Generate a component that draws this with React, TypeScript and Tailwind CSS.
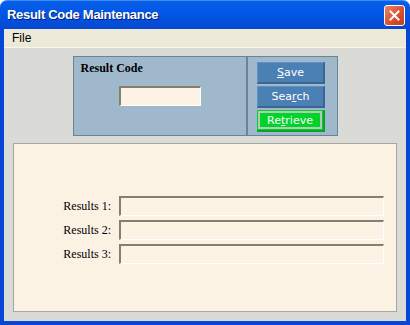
import React from "react";

const serif = { fontFamily: '"Liberation Serif", "Times New Roman", serif' };
const sans = { fontFamily: 'Tahoma, "DejaVu Sans", "Liberation Sans", sans-serif' };

function SunkenField({ className = "" }: { className?: string }) {
  return (
    <div
      className={`h-[20px] bg-[#fcf3e4] border-t-2 border-l-2 border-t-[#848071] border-l-[#848071] border-b border-r border-b-white border-r-white ${className}`}
    />
  );
}

function PanelButton({ children, green = false }: { children: React.ReactNode; green?: boolean }) {
  if (green) {
    return (
      <button className="w-[68px] h-[22px] bg-[#00d42b] border-b-2 border-r-2 border-[#0aa32a] p-[1px] text-white text-[11px] leading-none">
        <div className="w-full h-full border-2 border-[#b8c8b8] flex items-center justify-center">{children}</div>
      </button>
    );
  }
  return (
    <button className="w-[68px] h-[22px] bg-[#4b80b5] border-b-2 border-r-2 border-t border-l border-b-[#3a6690] border-r-[#3a6690] border-t-[#5d90c4] border-l-[#5d90c4] text-white text-[11px] leading-none flex items-center justify-center">
      {children}
    </button>
  );
}

export default function App() {
  return (
    <div className="w-[410px] h-[325px] flex flex-col select-none" style={sans}>
      {/* title bar */}
      <div className="h-[29px] shrink-0 rounded-t-[7px] bg-gradient-to-b from-[#0a5fe8] via-[#0055e5] to-[#0847d0] flex items-center pl-[7px] pr-[5px] border-t border-[#3c8cf8]">
        <span
          className="text-white text-[13px] font-bold tracking-[-0.3px] [text-shadow:1px_1px_0_#0a1e6e]"
          style={{ fontFamily: '"Liberation Sans", Arial, sans-serif' }}
        >
          Result Code Maintenance
        </span>
        <div className="ml-auto w-[21px] h-[21px] rounded-[3px] border border-white bg-gradient-to-br from-[#e9856a] via-[#dc5332] to-[#c83a1c] flex items-center justify-center">
          <svg width="11" height="11" viewBox="0 0 11 11">
            <path d="M1.5 1.5 L9.5 9.5 M9.5 1.5 L1.5 9.5" stroke="white" strokeWidth="2" strokeLinecap="square" />
          </svg>
        </div>
      </div>

      {/* frame */}
      <div className="flex-1 flex flex-col border-x-4 border-b-4 border-[#0846d8]">
        <div
          className="h-[19px] shrink-0 bg-[#ece9d8] flex items-center px-[4px] text-[12px] text-black border-b border-[#f6f5ee]"
          style={{ fontFamily: '"Liberation Sans", Arial, sans-serif' }}
        >
          <span className="px-[4px]">File</span>
        </div>

        <div className="flex-1 bg-[#dadad6] flex flex-col pt-[8px] px-[9px] pb-[9px]">
          {/* top panel */}
          <div className="mx-auto w-[265px] h-[80px] shrink-0 flex border border-[#6c8393] bg-[#9fb8cb]">
            <div className="w-[174px] border-r-2 border-[#6c8393] flex flex-col pl-[7px] pt-[4px]">
              <span className="text-[12px] font-bold text-black leading-[14px]" style={serif}>
                Result Code
              </span>
              <div className="flex justify-center mt-[11px] pr-[7px]">
                <SunkenField className="w-[82px]" />
              </div>
            </div>
            <div className="flex-1 flex flex-col items-center pt-[5px] gap-[2px] pr-[2px]">
              <PanelButton>
                <span><u>S</u>ave</span>
              </PanelButton>
              <PanelButton>
                <span>Sea<u>r</u>ch</span>
              </PanelButton>
              <PanelButton green>
                <span>Re<u>t</u>rieve</span>
              </PanelButton>
            </div>
          </div>

          {/* bottom panel */}
          <div className="mt-[7px] flex-1 border border-[#a6a6a2] bg-[#fcf2e3] flex flex-col justify-center gap-[4px] pr-[12px] pt-[4px]">
            {["Results 1:", "Results 2:", "Results 3:"].map((l) => (
              <div key={l} className="flex items-center gap-[8px]">
                <span className="w-[97px] text-right text-[12px] text-black leading-none" style={serif}>
                  {l}
                </span>
                <SunkenField className="flex-1" />
              </div>
            ))}
          </div>
        </div>
      </div>
    </div>
  );
}
